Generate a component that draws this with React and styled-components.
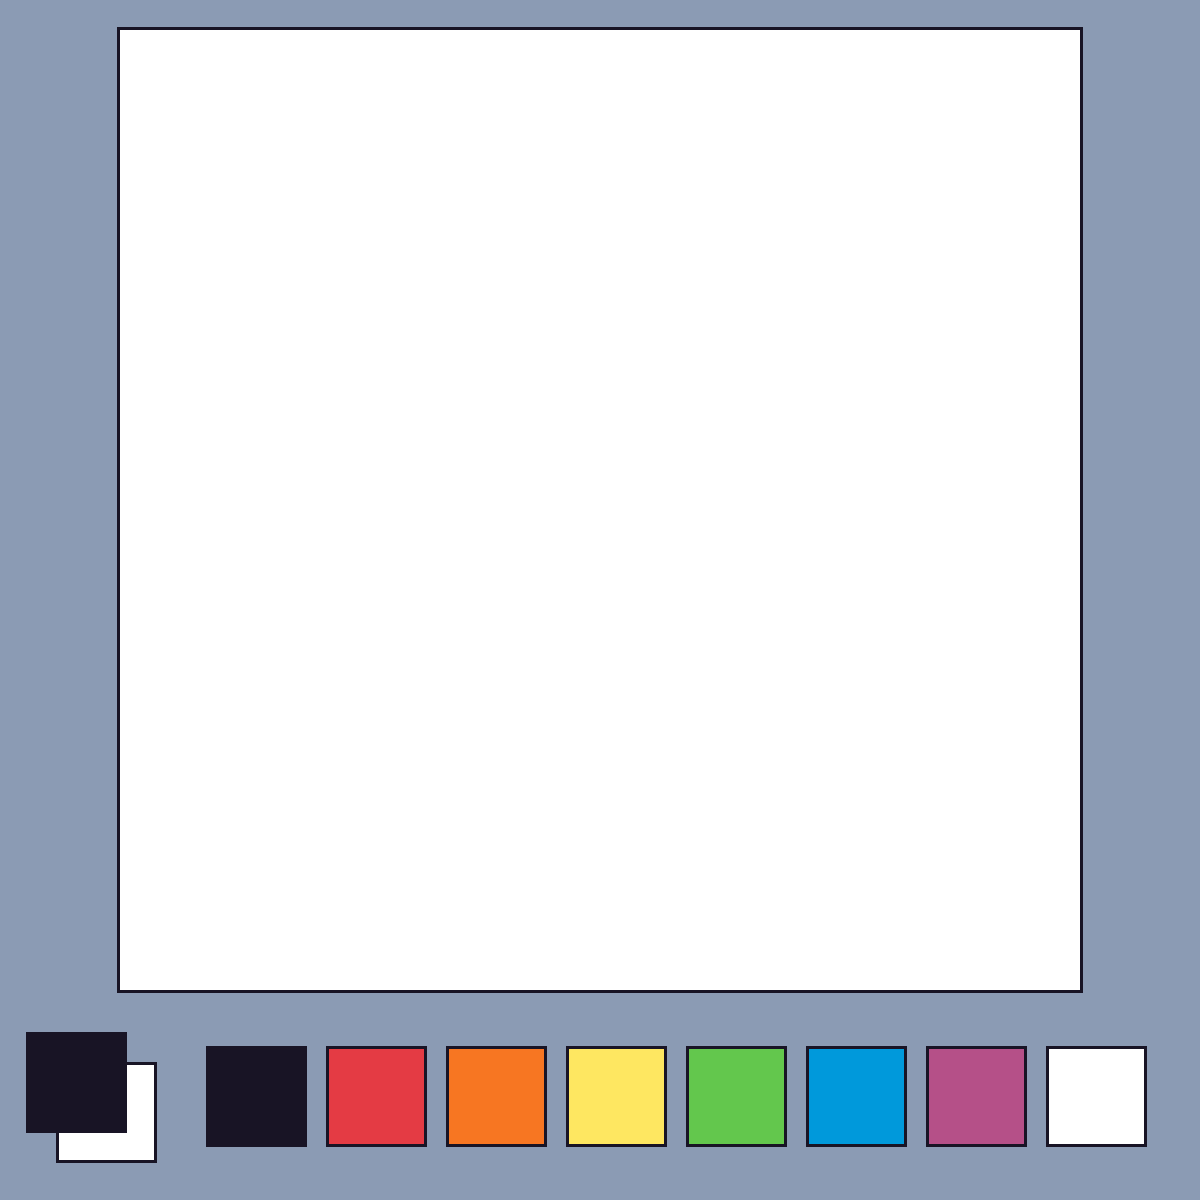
import React, { useState } from "react"
import styled, { createGlobalStyle } from "styled-components"

const ink = "#181425"

const palette = [
  "#181425",
  "#e43b44",
  "#f77622",
  "#fee761",
  "#63c74d",
  "#0099db",
  "#b55088",
  "#ffffff",
]

const GlobalStyle = createGlobalStyle`
  html, body {
    margin: 0;
    padding: 0;
    background: #8b9bb4;
    font-family: "Liberation Sans", Arial, sans-serif;
  }
`

const Page = styled.div`
  width: 1200px;
  height: 1200px;
  display: flex;
  flex-direction: column;
`

const Stage = styled.div`
  display: flex;
  justify-content: center;
  padding-top: 27px;
`

const Canvas = styled.div`
  box-sizing: border-box;
  width: 966px;
  height: 966px;
  background: #ffffff;
  border: 3px solid ${ink};
`

const Toolbar = styled.div`
  flex: 1;
  display: flex;
  align-items: center;
  padding-left: 26px;
  gap: 50px;
`

// current colour pair, primary sits on top of secondary
const Current = styled.div`
  position: relative;
  width: 130px;
  height: 130px;
  flex-shrink: 0;
`

const Primary = styled.div`
  position: absolute;
  top: 0;
  left: 0;
  z-index: 2;
  box-sizing: border-box;
  width: 101px;
  height: 101px;
  background: ${props => props.color};
`

const Secondary = styled.div`
  position: absolute;
  top: 30px;
  left: 30px;
  z-index: 1;
  box-sizing: border-box;
  width: 101px;
  height: 101px;
  background: ${props => props.color};
  border: 3px solid ${ink};
`

const Swatches = styled.div`
  display: flex;
  gap: 19px;
`

const Swatch = styled.button`
  box-sizing: border-box;
  width: 101px;
  height: 101px;
  padding: 0;
  margin: 0;
  background: ${props => props.color};
  border: 3px solid ${ink};
  cursor: pointer;
`

const App = () => {
  const [primary, setPrimary] = useState(palette[0])
  const [secondary, setSecondary] = useState(palette[7])

  return (
    <Page>
      <GlobalStyle />
      <Stage>
        <Canvas />
      </Stage>
      <Toolbar>
        <Current>
          <Primary color={primary} />
          <Secondary color={secondary} />
        </Current>
        <Swatches>
          {palette.map(c => (
            <Swatch
              key={c}
              color={c}
              onClick={() => setPrimary(c)}
              onContextMenu={e => {
                e.preventDefault()
                setSecondary(c)
              }}
            />
          ))}
        </Swatches>
      </Toolbar>
    </Page>
  )
}

export default App
